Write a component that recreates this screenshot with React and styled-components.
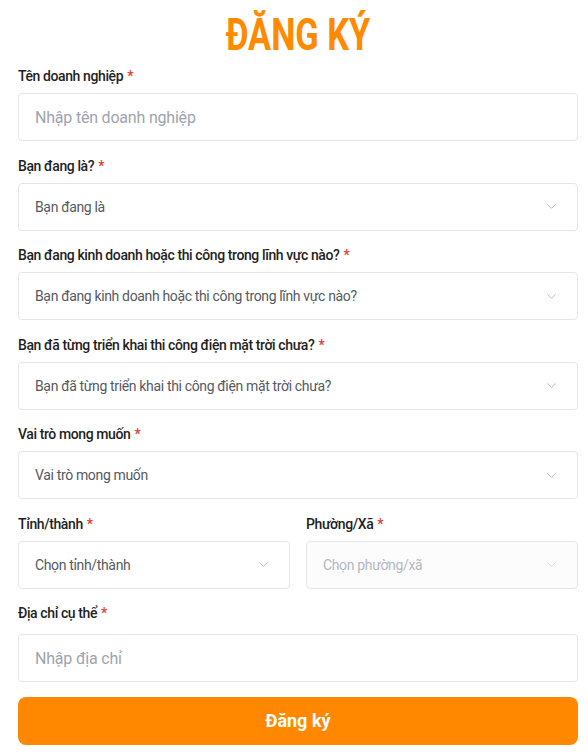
import styled, { createGlobalStyle } from "styled-components";
import { ChevronDown } from "lucide-react";

const GlobalStyle = createGlobalStyle`
  * { box-sizing: border-box; }
  body {
    margin: 0;
    background: #ffffff;
    font-family: Roboto, "Noto Sans", sans-serif;
    color: #222;
  }
`;

const Page = styled.div`
  padding: 8px 10px 8px 18px;
  width: 588px;
`;

const Title = styled.h1`
  margin: 0 0 8px;
  height: 50px;
  line-height: 54px;
  text-align: center;
  font-family: Roboto, sans-serif;
  font-weight: 700;
  font-size: 44px;
  color: #ff8a00;
  transform: scaleX(0.78);
`;

const Field = styled.div`
  margin-bottom: 14.5px;
  min-width: 0;
`;

const Label = styled.div`
  font-size: 14px;
  line-height: 20px;
  font-weight: 500;
  letter-spacing: -0.4px;
  color: #1f1f1f;
  margin-bottom: ${(p) => p.$gap || 7}px;
  span {
    color: #e53935;
    margin-left: 4px;
  }
`;

const TextInput = styled.input`
  display: block;
  width: 100%;
  height: 48px;
  border: 1px solid #e3e5ea;
  border-radius: 4px;
  padding: 0 16px;
  font-family: inherit;
  font-size: 16px;
  letter-spacing: -0.2px;
  color: #333;
  outline: none;
  &::placeholder {
    color: #9ea4ae;
  }
`;

const SelectBox = styled.div`
  display: flex;
  align-items: center;
  justify-content: space-between;
  height: 48px;
  border: 1px solid #e3e5ea;
  border-radius: 4px;
  padding: 0 18px 0 16px;
  font-size: 14px;
  letter-spacing: -0.35px;
  color: ${(p) => (p.$disabled ? "#b4b8be" : "#555a62")};
  background: ${(p) => (p.$disabled ? "#fcfcfc" : "#fff")};
  svg {
    color: ${(p) => (p.$disabled ? "#d2d4d8" : "#b0b4ba")};
    flex-shrink: 0;
  }
`;

const Row = styled.div`
  display: grid;
  grid-template-columns: 1fr 1fr;
  gap: 16px;
`;

const SubmitButton = styled.button`
  display: block;
  width: 100%;
  height: 48px;
  margin-top: 1px;
  border: none;
  border-radius: 8px;
  background: #ff8800;
  color: #fff;
  font-family: inherit;
  font-weight: 700;
  font-size: 18px;
`;

const Required = () => <span>*</span>;

const Select = ({ text, disabled }) => (
  <SelectBox $disabled={disabled}>
    {text}
    <ChevronDown size={15} strokeWidth={1.5} />
  </SelectBox>
);

export default function App() {
  return (
    <>
      <GlobalStyle />
      <Page>
        <Title>ĐĂNG KÝ</Title>
        <Field>
          <Label>
            Tên doanh nghiệp<Required />
          </Label>
          <TextInput placeholder="Nhập tên doanh nghiệp" />
        </Field>
        <Field>
          <Label>
            Bạn đang là?<Required />
          </Label>
          <Select text="Bạn đang là" />
        </Field>
        <Field>
          <Label>
            Bạn đang kinh doanh hoặc thi công trong lĩnh vực nào?<Required />
          </Label>
          <Select text="Bạn đang kinh doanh hoặc thi công trong lĩnh vực nào?" />
        </Field>
        <Field>
          <Label>
            Bạn đã từng triển khai thi công điện mặt trời chưa?<Required />
          </Label>
          <Select text="Bạn đã từng triển khai thi công điện mặt trời chưa?" />
        </Field>
        <Field>
          <Label>
            Vai trò mong muốn<Required />
          </Label>
          <Select text="Vai trò mong muốn" />
        </Field>
        <Row>
          <Field>
            <Label>
              Tỉnh/thành<Required />
            </Label>
            <Select text="Chọn tỉnh/thành" />
          </Field>
          <Field>
            <Label>
              Phường/Xã<Required />
            </Label>
            <Select text="Chọn phường/xã" disabled />
          </Field>
        </Row>
        <Field>
          <Label $gap={11}>
            Địa chỉ cụ thể<Required />
          </Label>
          <TextInput placeholder="Nhập địa chỉ" />
        </Field>
        <SubmitButton>Đăng ký</SubmitButton>
      </Page>
    </>
  );
}
